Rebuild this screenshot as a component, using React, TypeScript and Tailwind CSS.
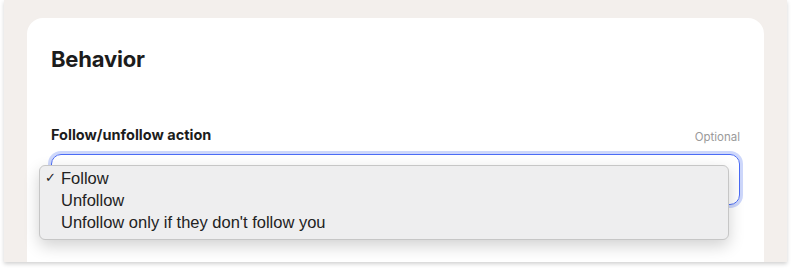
export default function App() {
  const options = ["Follow", "Unfollow", "Unfollow only if they don't follow you"];
  return (
    <div className="w-[791px] h-[271px] bg-white overflow-hidden">
      <div className="ml-[4px] w-[783px] h-[262px] bg-[#f3efec] shadow-[0_2px_4px_rgba(0,0,0,0.18)] px-[23px] pt-[18px] overflow-hidden">
        <div className="h-[260px] bg-white rounded-t-[16px] px-[24px] pt-[27px] font-['Inter',sans-serif] text-[#1c1c1c]">
          <h2 className="text-[22px] leading-[28px] font-bold tracking-[-0.2px]">Behavior</h2>
          <div className="mt-[52px] flex items-end justify-between">
            <span className="text-[14.5px] leading-[20px] font-bold">Follow/unfollow action</span>
            <span className="text-[11.5px] leading-[16px] text-[#9a9a9a]">Optional</span>
          </div>
          <div className="relative mt-[9px]">
            <div className="h-[51px] rounded-[10px] border border-[#4b6cf5] ring-[3px] ring-[#cdd7fb]" />
            <div className="absolute left-[-12px] top-[11px] w-[690px] h-[75px] rounded-[6px] border border-[#c6c6c6] bg-[#eeeeef] shadow-[0_6px_16px_rgba(0,0,0,0.18)] pt-[1px] font-['Liberation_Sans',sans-serif] text-[16.5px] leading-[22px] text-[#222]">
              {options.map((o, i) => (
                <div key={o} className="flex items-center">
                  <span className="w-[21px] pl-[5px] text-[13px]">{i === 0 ? "✓" : ""}</span>
                  <span>{o}</span>
                </div>
              ))}
            </div>
          </div>
        </div>
      </div>
    </div>
  );
}
